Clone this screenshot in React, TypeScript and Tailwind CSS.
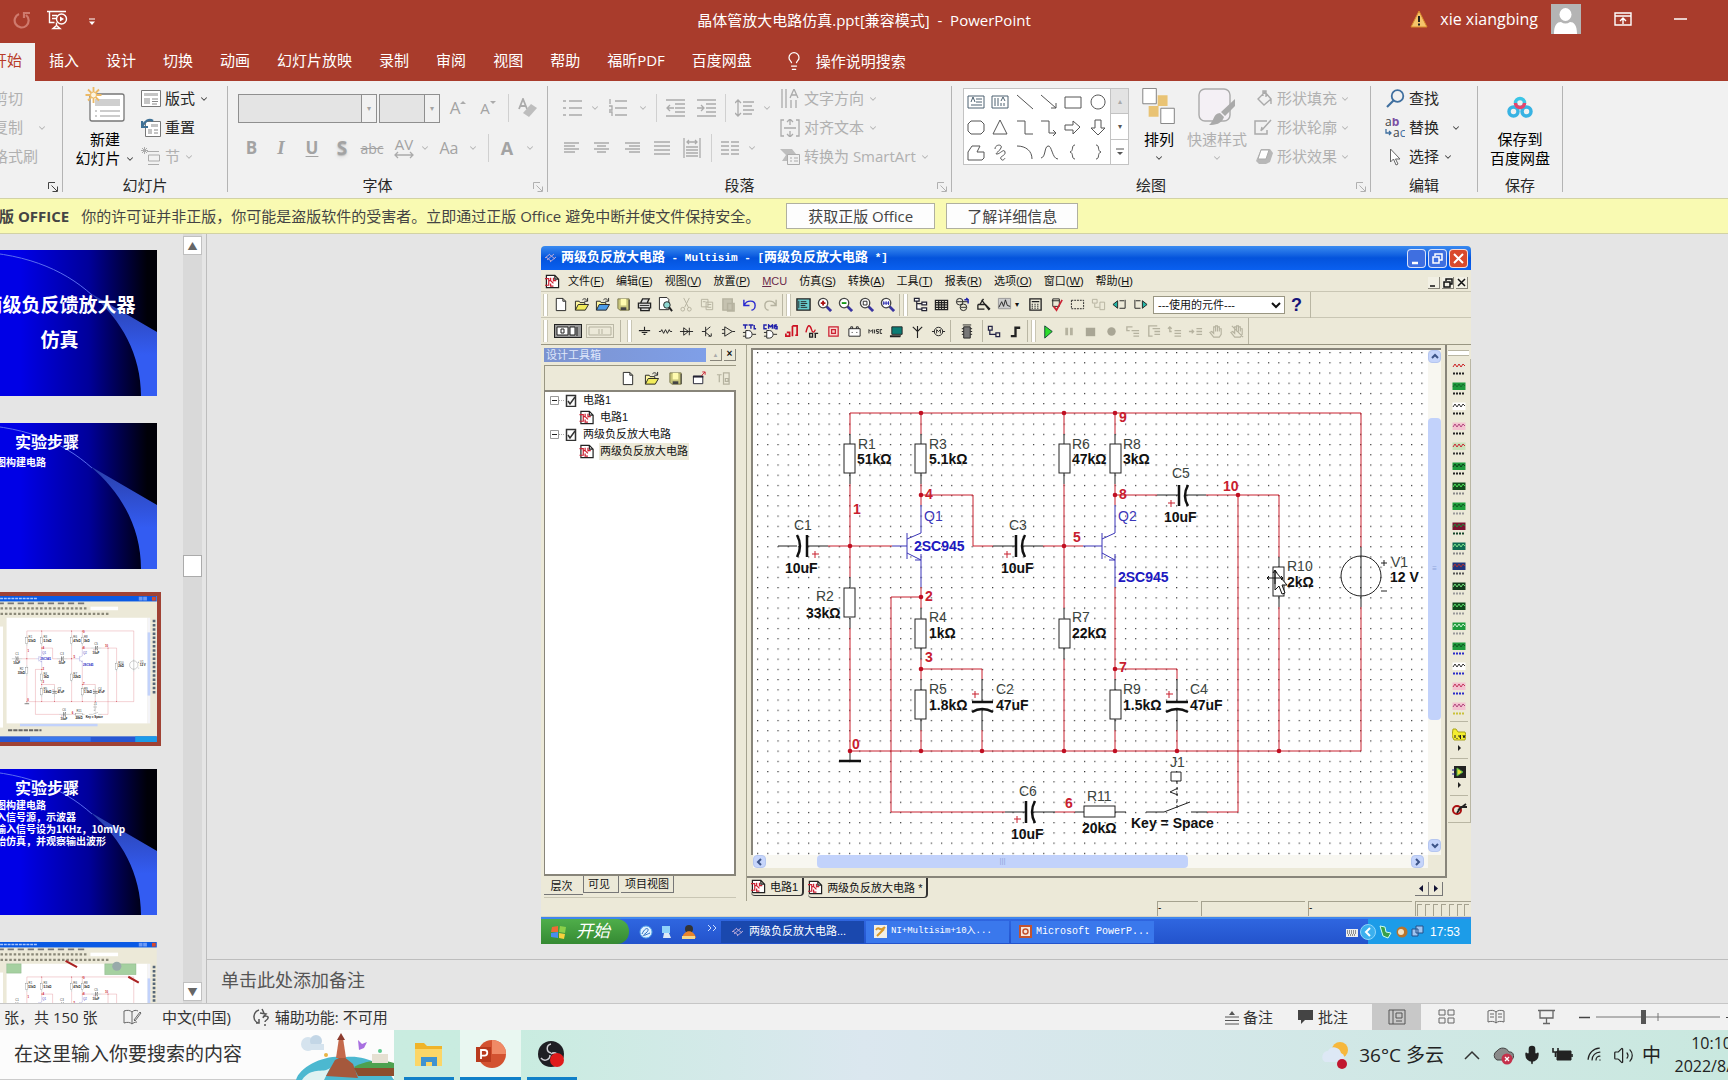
import type { ReactNode } from "react";
import { ChevronDown, Lightbulb, Mic, Volume2, Wifi } from "lucide-react";

const UI = "font-['Open_Sans','Noto_Sans_CJK_SC',sans-serif]";
const XP = "font-['Liberation_Sans','Noto_Sans_CJK_SC',sans-serif]";

/* ---------- HELPERS ---------- */

type SvgProps = { w?: number; h?: number; box?: string; className?: string; children: ReactNode };

function Svg({ w = 16, h = 16, box, className = "", children }: SvgProps) {
  return (
    <svg width={w} height={h} viewBox={box ?? `0 0 ${w} ${h}`} fill="none" className={`shrink-0 ${className}`} aria-hidden="true">
      {children}
    </svg>
  );
}

function Chev({ off = false }: { off?: boolean }) {
  return <ChevronDown size={10} strokeWidth={2.5} className={off ? "shrink-0 text-[#b5b5b5]" : "shrink-0 text-[#444]"} />;
}

function Divider() {
  return <div className="mt-[5px] h-[106px] w-px shrink-0 bg-[#b4b4b4]" />;
}

function Launcher({ off = true }: { off?: boolean }) {
  return (
    <button aria-label="更多选项" className="absolute right-1 bottom-1.5">
      <Svg w={10} h={10}>
        <path d="M.5 7V.5H7M3.5 3.5l5.5 5.5M9.500 4.500v5h-5" stroke={off ? "#b0b0b0" : "#444"} />
      </Svg>
    </button>
  );
}

function Group({ label, width, launcher = false, children }: { label: string; width: string; launcher?: boolean; children: ReactNode }) {
  return (
    <section className={`relative flex shrink-0 flex-col ${width}`}>
      <div className="flex h-[92px] pt-[3px]">{children}</div>
      <div className={`text-center leading-[25px] text-[#262626] ${launcher ? "pr-5" : ""}`}>{label}</div>
      {launcher && <Launcher />}
    </section>
  );
}

function Row({ icon, text, off = false, chev = true, gap = "gap-1" }: { icon: ReactNode; text: string; off?: boolean; chev?: boolean; gap?: string }) {
  return (
    <button className={`flex h-[29px] items-center whitespace-nowrap ${gap} ${off ? "text-[#b0b0b0]" : "text-[#262626]"}`}>
      <span className="flex w-5 shrink-0 justify-center">{icon}</span>
      {text}
      {chev && <Chev off={off} />}
    </button>
  );
}

/* ---------- TITLE BAR AND TABS ---------- */

function TitleBar() {
  return (
    <header className="relative flex h-[43px] items-center bg-[#a93c2c] pb-1 text-white">
      <button aria-label="恢复" className="ml-[13px]">
        <Svg w={18} h={20}>
          <path d="M6 4a7 7 0 1 0 7 1M11 8V3h6" stroke="#cf7a6d" strokeWidth="2.200" />
        </Svg>
      </button>
      <button aria-label="从头开始" className="ml-4">
        <Svg w={21} h={20}>
          <path d="M0 1.500h19M2.500 2v10.500h5M5 5.500h5M5 8.500h4M9.500 12.500v3M6 18.500l3.500-3 3.500 3z" stroke="#fff" strokeWidth="1.400" />
          <circle cx="14.500" cy="9" r="5" fill="#a93c2c" stroke="#fff" strokeWidth="1.400" />
          <path d="M13 6.500l4 2.500-4 2.500z" fill="#fff" />
        </Svg>
      </button>
      <button aria-label="自定义快速访问工具栏" className="mt-1 ml-5">
        <Svg w={8} h={8}><path d="M1 1h6" stroke="#fff" /><path d="M1 3.500h6L4 7z" fill="#fff" /></Svg>
      </button>
      <h1 className="absolute inset-x-0 text-center leading-[40px]">晶体管放大电路仿真.ppt[兼容模式]&nbsp; -&nbsp; PowerPoint</h1>
      <div className="absolute top-0 right-[41px] flex h-[37px] items-center">
        <Svg w={18} h={18} className="mr-3">
          <path d="M9 1l8 16H1z" fill="#f5c46a" stroke="#d98a2b" />
          <path d="M9 6v6M9 13.500v2" stroke="#222" strokeWidth="2" />
        </Svg>
        <span className="text-[16px]">xie xiangbing</span>
        <Svg w={30} h={30} className="mr-[33px] ml-[13px]">
          <rect width="30" height="30" fill="#b4b4b4" />
          <ellipse cx="14.500" cy="10.500" rx="6" ry="6.500" fill="#fff" />
          <path d="M3 30c0-9 3-12 7-12 3 2 6 2 9 0 4 0 7 3 7 12z" fill="#fff" />
        </Svg>
        <button aria-label="功能区显示选项" className="mr-[42px]">
          <Svg w={18} h={14}><path d="M1 1h16v12H1zM1 4h16M9 12V6M6 9l3-3 3 3" stroke="#fff" strokeWidth="1.400" /></Svg>
        </button>
        <button aria-label="最小化"><Svg w={13} h={4}><path d="M0 2h13" stroke="#fff" strokeWidth="1.500" /></Svg></button>
      </div>
    </header>
  );
}

const tabs = ["插入", "设计", "切换", "动画", "幻灯片放映", "录制", "审阅", "视图", "帮助", "福昕PDF", "百度网盘"];

function Tabs() {
  return (
    <nav className="flex h-[38px] overflow-hidden bg-[#a93c2c] leading-[34px] text-white">
      <button className="-ml-2 h-[38px] shrink-0 bg-[#f1f1f1] pr-[13px] pb-1 text-[#b83b28]">开始</button>
      <div className="ml-[14px] flex h-[34px] gap-[27px]">
        {tabs.map((t) => (
          <button key={t} className="whitespace-nowrap">{t}</button>
        ))}
      </div>
      <button className="ml-8 flex h-[35px] items-center gap-3 whitespace-nowrap">
        <Lightbulb size={20} strokeWidth={1.5} />
        操作说明搜索
      </button>
    </nav>
  );
}

/* ---------- RIBBON ---------- */

const G = "#ababab";

function Lines({ d, w = 19, h = 18 }: { d: string; w?: number; h?: number }) {
  return <Svg w={w} h={h}><path d={d} stroke={G} strokeWidth="1.300" /></Svg>;
}

function Cell({ w, children, label }: { w: string; children: ReactNode; label: string }) {
  return <button aria-label={label} className={`flex h-7 shrink-0 items-center justify-center ${w}`}>{children}</button>;
}

const shapes = [
  "M1 3h16v12H1zM9 6h6M9 9h6M4 12h11M4 9l2-5 2 5",
  "M1 3h16v12H1zM4 5v8M7 5v8M10 10v3M13 10v3M10 8l2-4 2 4",
  "M1 2l16 14",
  "M1 2l15 13M16 10v5h-5",
  "M1 4h16v11H1z",
  "M9 2a7 7 0 1 0 .1 0z",
  "M4 3h10l3 3v7l-3 3H4l-3-3V6z",
  "M9 2l7 14H2z",
  "M1 3h8v13h8",
  "M1 3h8v12h7M13 12l3 3-3 3",
  "M1 7h8V3l7 6-7 7v-4H1z",
  "M6 2h6v8h4l-7 7-7-7h4z",
  "M1 9l4-6h8l-3 6h7v6l-2 2H1z",
  "M4 6c0-5 8-5 6-1S3 11 6 11s7-6 8-2-6 4-4 7 4-1 4-1",
  "M1 3c9 0 15 5 15 13",
  "M1 15c5-1 3-11 7-12s4 13 10 13",
  "M11 2c-4 0-1 6-5 7 4 1 1 7 5 7",
  "M7 2c4 0 1 6 5 7-4 1-1 7-5 7",
];

function Ribbon() {
  return (
    <div className="flex h-[117px] overflow-hidden bg-[#f1f1f1]">
      <section className="relative w-[62px] shrink-0 text-[#b0b0b0]">
        <div className="-ml-[7px] pt-[3px] leading-[29px] whitespace-nowrap">
          <button className="block">剪切</button>
          <button className="flex items-center gap-3.5">复制 <Chev off /></button>
          <button className="block">格式刷</button>
        </div>
        <Launcher off={false} />
      </section>
      <Divider />

      <Group label="幻灯片" width="w-[164px]">
        <button className="ml-2 flex w-[68px] flex-col items-center pt-0.5 leading-[19px]">
          <Svg w={42} h={38}>
            <rect x="6" y="8" width="34" height="27" rx="2" fill="#fff" stroke="#777" strokeWidth="1.300" />
            <path d="M11 13h25v7H11z" fill="#cfcfcf" />
            <path d="M11 25h2M16 25h20M11 30h2M16 30h20" stroke="#999" />
            <path d="M9.500 1v16M1.500 9h16M4 3.500l11 11M15 3.500l-11 11" stroke="#ecb964" strokeWidth="1.800" />
            <circle cx="9.500" cy="9" r="3" fill="#fdf4de" stroke="#ecb964" />
          </Svg>
          <span className="mt-1.5">新建</span>
          <span className="flex items-center gap-1 whitespace-nowrap">幻灯片 <Chev /></span>
        </button>
        <div className="ml-0.5">
          <Row text="版式" icon={<Svg w={20} h={17}><path d="M.5.5h19v16H.5z" fill="#fff" stroke="#777" /><path d="M3 3h14v3H3zM3 8h6v6H3z" fill="#c4c4c4" /><path d="M11 9h6M11 11.500h6M11 14h5" stroke="#888" /></Svg>} />
          <Row text="重置" chev={false} icon={<Svg w={20} h={19}><path d="M4.500 3.500h15v15h-15z" fill="#fff" stroke="#777" /><path d="M10 6h7v3h-7zM7 11h4v5H7z" fill="#c4c4c4" /><path d="M13 12h4M13 15h4" stroke="#888" /><path d="M1 3v6h6M1.500 8C4 3 8 0 12 3" stroke="#3f7196" strokeWidth="2.200" /></Svg>} />
          <Row text="节" off icon={<Svg w={20} h={19}><path d="M6 4.500h12M7.500 8h11v6h-11zM7 17.500h11M1 1l5 5M6 1L1 6M3.500 0v7M0 3.500h7" stroke={G} /></Svg>} />
        </div>
      </Group>
      <Divider />

      <Group label="字体" width="w-[319px]" launcher>
        <div className="w-full pl-[10px] text-[#a3a3a3]">
          <div className="flex h-12 items-center">
            <input aria-label="字体名称" disabled className="h-[29px] w-[124px] border border-[#8f8f8f] bg-[#e4e4e4]" />
            <button aria-label="选择字体" className="mr-0.5 -ml-px flex h-[29px] w-4 items-center justify-center border border-[#8f8f8f] text-[8px]">▾</button>
            <input aria-label="字号" disabled className="h-[29px] w-[46px] border border-[#8f8f8f] bg-[#e4e4e4]" />
            <button aria-label="选择字号" className="-ml-px flex h-[29px] w-4 items-center justify-center border border-[#8f8f8f] text-[8px]">▾</button>
            <Cell w="w-[36px]" label="增大字号"><span className="text-[17px]">A</span><Svg w={6} h={16}><path d="M0 4l3-3 3 3z" fill={G} /></Svg></Cell>
            <Cell w="w-[24px]" label="减小字号"><span className="text-[15px]">A</span><Svg w={6} h={16}><path d="M0 1h6L3 4z" fill={G} /></Svg></Cell>
            <div className="ml-2 h-7 w-px bg-[#d0d0d0]" />
            <Cell w="w-[38px]" label="清除格式"><Svg w={20} h={20}><path d="M1 11L5 1l4 10M2.500 8h5" stroke={G} strokeWidth="1.800" /><path d="M5 15l8-9 6 4-8 9z" fill="#bdbdbd" /></Svg></Cell>
          </div>
          <div className="flex h-8 items-center text-[17px]">
            <Cell w="w-[27px]" label="加粗"><b>B</b></Cell>
            <Cell w="w-[32px]" label="倾斜"><i className="font-['Liberation_Serif',serif] text-[19px] font-bold">I</i></Cell>
            <Cell w="w-[30px]" label="下划线"><b className="underline underline-offset-2">U</b></Cell>
            <Cell w="w-[30px]" label="阴影"><b className="text-[19px] text-shadow-md">S</b></Cell>
            <Cell w="w-[30px]" label="删除线"><s className="text-[14px]">abc</s></Cell>
            <Cell w="w-[33px]" label="字符间距">
              <Svg w={20} h={22} className="overflow-visible">
                <text x="10" y="13" textAnchor="middle" fontSize="15" fill="#a3a3a3">AV</text>
                <path d="M1 18h18M4 15l-3 3 3 3M16 15l3 3-3 3" stroke={G} strokeWidth="1.300" />
              </Svg>
            </Cell>
            <Chev off />
            <Cell w="w-[38px]" label="更改大小写"><span className="text-[16px]">Aa</span></Cell>
            <Chev off />
            <div className="ml-2.5 h-7 w-px bg-[#d0d0d0]" />
            <Cell w="w-[36px]" label="字体颜色"><b className="text-[18px] leading-5">A</b></Cell>
            <Chev off />
          </div>
        </div>
      </Group>
      <Divider />

      <Group label="段落" width="w-[403px]" launcher>
        <div className="w-[232px] pl-[10px]">
          <div className="flex h-12 items-center">
            <Cell w="w-[28px]" label="项目符号"><Lines d="M0 2h3M6 2h13M0 9h3M6 9h13M0 16h3M6 16h13" /></Cell>
            <span className="ml-1"><Chev off /></span>
            <Cell w="w-[34px]" label="编号"><Lines d="M2 0v5M7 2h12M1 7h3v4H1M7 9h12M1 13h3v4M7 16h12" /></Cell>
            <span className="ml-1"><Chev off /></span>
            <div className="ml-2 h-7 w-px bg-[#d0d0d0]" />
            <Cell w="w-[36px]" label="减少缩进"><Lines d="M0 1h19M9 5h10M9 9h10M9 13h10M0 17h19M8 9H1M4 6L1 9l3 3" /></Cell>
            <Cell w="w-[26px]" label="增加缩进"><Lines d="M0 1h19M9 5h10M9 9h10M9 13h10M0 17h19M0 9h7M4 6l3 3-3 3" /></Cell>
            <div className="ml-1.5 h-7 w-px bg-[#d0d0d0]" />
            <Cell w="w-[36px]" label="行距"><Lines d="M3 1v16M0 4l3-3 3 3M0 14l3 3 3-3M8 3h11M8 7h9M8 11h11M8 15h9" /></Cell>
            <Chev off />
          </div>
          <div className="flex h-8 items-center">
            <Cell w="w-[27px]" label="左对齐"><Lines w={15} h={12} d="M0 1h15M0 4h11M0 7h15M0 10h11" /></Cell>
            <Cell w="w-[32px]" label="居中"><Lines w={15} h={12} d="M0 1h15M3 4h9M0 7h15M3 10h9" /></Cell>
            <Cell w="w-[30px]" label="右对齐"><Lines w={15} h={12} d="M0 1h15M4 4h11M0 7h15M4 10h11" /></Cell>
            <Cell w="w-[30px]" label="两端对齐"><Lines w={16} h={15} d="M0 1h16M0 5h16M0 9h16M0 13h16" /></Cell>
            <Cell w="w-[30px]" label="分散对齐"><Lines w={18} h={20} d="M1 0v20M17 0v20M4 4h10M6 2L4 4l2 2M12 2l2 2-2 2M3 9h12M3 12h12M3 15h12M3 18h12" /></Cell>
            <div className="ml-1 h-7 w-px bg-[#d0d0d0]" />
            <Cell w="w-[35px]" label="分栏"><Lines w={18} h={15} d="M0 1h8M10 1h8M0 5h8M10 5h8M0 9h8M10 9h8M0 13h8M10 13h8" /></Cell>
            <Chev off />
          </div>
        </div>
        <div>
          <Row off text="文字方向" icon={<Lines w={20} h={20} d="M2 0v19M6 0v19M11 11v8M16 11v8M10 9l4-9 4 9M11.500 6h5" />} />
          <Row off text="对齐文本" icon={<Lines w={20} h={18} d="M4 1H1v16h3M16 1h3v16h-3M10 0v6M7 3l3-3 3 3M10 12v6M7 15l3 3 3-3M4 9h12" />} />
          <Row off text="转换为 SmartArt" icon={<Svg w={20} h={17}><path d="M0 1h12l4 5h-8v7H2l4-6z" fill="#bdbdbd" /><path d="M7.500 6.500h12v10h-12zM10 10h2M14 10h4M10 13h2M14 13h4" fill="#f1f1f1" stroke={G} /></Svg>} />
        </div>
      </Group>
      <Divider />

      <Group label="绘图" width="w-[418px]" launcher>
        <div className="mt-1 ml-[11px] flex h-[77px] w-[166px] border border-[#c3c3c3] bg-white">
          <div className="grid flex-1 grid-cols-6 place-items-center">
            {shapes.map((d, i) => (
              <button key={i} aria-label={`形状 ${i + 1}`}><Svg w={18} h={18}><path d={d} stroke={i < 2 ? "#4d6170" : "#555"} /></Svg></button>
            ))}
          </div>
          <div className="flex w-[18px] flex-col border-l border-[#c3c3c3] text-[8px] text-[#555]">
            <button className="flex-1 bg-[#e3e3e3] text-[#aaa]">▴</button>
            <button className="flex-1 border-y border-[#c3c3c3]">▾</button>
            <button aria-label="其他形状" className="flex flex-1 items-center justify-center"><Svg w={8} h={8}><path d="M0 1h8" stroke="#555" /><path d="M1 4h6L4 7z" fill="#555" /></Svg></button>
          </div>
        </div>
        <button className="ml-[7px] flex w-[46px] flex-col items-center pt-1 leading-[19px]">
          <Svg w={36} h={36} box="0 0 37 40"><path d="M17 8h11v12H17zM7 20h11v12H7z" fill="#e9c374" /><path d="M.5.500h15v17H.5zM20.500 22.500h15v17h-15z" fill="#fff" stroke="#777" /></Svg>
          <span className="mt-1.5">排列</span>
          <span className="py-1"><Chev /></span>
        </button>
        <button className="flex w-[70px] flex-col items-center pt-1 leading-[19px] whitespace-nowrap text-[#b0b0b0]">
          <Svg w={38} h={38} className="-mb-0.5"><rect x="1" y="1" width="31" height="32" rx="6" fill="#f4f0f5" stroke="#aaa" strokeWidth="1.400" /><path d="M37 11v7L27 28l-4-4zM22 25l4 4c-2 7-9 8-15 8 5-3 4-12 11-12z" fill="#aaa" /></Svg>
          <span className="mt-1.5">快速样式</span>
          <span className="py-1"><Chev off /></span>
        </button>
        <div className="ml-0.5">
          <Row off text="形状填充" icon={<Svg w={17} h={17}><path d="M2 9l7-7 6 7-7 6zM7 6V1h3v6M15 9v5" stroke={G} strokeWidth="1.400" /></Svg>} gap="gap-[3px]" />
          <Row off text="形状轮廓" icon={<Svg w={20} h={17}><path d="M13 2H1v13h12v-4M8 11l9-10M7 12l1-4" stroke={G} strokeWidth="1.500" /></Svg>} gap="gap-[3px]" />
          <Row off text="形状效果" icon={<Svg w={19} h={17}><path d="M6 1h9l3 4-3 9-4 2H4l-3-3z" fill="#b8b8b8" /><path d="M6 2h8l-3 9H3z" fill="#fff" stroke={G} /></Svg>} gap="gap-[3px]" />
        </div>
      </Group>
      <Divider />

      <Group label="编辑" width="w-[106px]">
        <div className="ml-3.5">
          <Row text="查找" chev={false} icon={<Svg w={19} h={19}><circle cx="11.500" cy="7" r="5.800" stroke="#3f6f9f" strokeWidth="1.800" /><path d="M7.500 11.500L1 18" stroke="#3f6f9f" strokeWidth="2.200" /></Svg>} />
          <div className="flex items-center gap-3">
            <Row
              text="替换"
              chev={false}
              icon={
                <Svg w={20} h={20}>
                  <text x="0" y="8" fontSize="12" fill="#444">a<tspan fill="#7b4ea3" fontWeight="bold">b</tspan></text>
                  <text x="8" y="19" fontSize="12" fill="#444">a<tspan fill="#3f6f9f">c</tspan></text>
                  <path d="M1 11v4h5M4 13l2 2-2 2" stroke="#3f6f9f" strokeWidth="1.300" />
                </Svg>
              }
            />
            <Chev />
          </div>
          <Row text="选择" icon={<Svg w={12} h={18}><path d="M1.500 1v13l3-3 2.500 6 2-1-2.500-5h4.500z" fill="#fff" stroke="#666" /></Svg>} />
        </div>
      </Group>
      <Divider />

      <Group label="保存" width="w-[84px]">
        <button className="flex w-full flex-col items-center pt-3 leading-[19px]">
          <Svg w={28} h={22} className="mb-2">
            <circle cx="7.500" cy="15.500" r="4.500" stroke="#38b3e3" strokeWidth="3.500" />
            <circle cx="20.500" cy="15.500" r="4.500" stroke="#38b3e3" strokeWidth="3.500" />
            <circle cx="14" cy="7" r="4.500" stroke="#3cc5e6" strokeWidth="3.500" />
            <path d="M9.500 7a4.500 4.500 0 0 0 9 0" stroke="#e5446d" strokeWidth="3.500" />
          </Svg>
          <span className="mt-1">保存到</span>
          <span>百度网盘</span>
        </button>
      </Group>
      <Divider />
    </div>
  );
}

function LicenseBar() {
  return (
    <div className="flex h-9 shrink-0 items-center overflow-hidden border-y border-[#d2d2a4] bg-[#f9fab2] whitespace-nowrap text-[#444]">
      <b className="-ml-px">版 OFFICE</b>
      <span className="ml-3">你的许可证并非正版，你可能是盗版软件的受害者。立即通过正版 Office 避免中断并使文件保持安全。</span>
      <button className="ml-[26px] h-[26px] w-[149px] border border-[#b0b0a0] bg-[#fdfdfd] leading-6">获取正版 Office</button>
      <button className="ml-[11px] h-[26px] w-[132px] border border-[#b0b0a0] bg-[#fdfdfd] leading-6">了解详细信息</button>
    </div>
  );
}

/* ---------- SCHEMATIC ---------- */

const RED = "#c8202f";
const BLUE = "#3a35b8";

const wires = [
  "M850 434V413H1361V547M1361 607V751H850",
  "M850 484V577M850 628V751",
  "M828 546H892",
  "M921 413V434M921 484V505M921 495H973V546H993",
  "M921 587V608M921 597H891V812H1005",
  "M921 659V679M921 669H982V679M921 730V751M982 730V751",
  "M1043 546H1083M1064 413V434M1064 484V608M1064 659V751",
  "M1115 413V434M1115 484V505M1115 495H1157",
  "M1206 495H1279V557M1238 495V812H1207M1279 607V751",
  "M1115 587V679M1115 669H1177V679M1115 730V751M1177 730V751",
  "M1055 812H1075",
];

const leads = [
  "M850 434V444M850 473V484M850 577V587M850 618V628",
  "M921 434V444M921 473V484M921 608V618M921 648V659M921 679V690M921 719V730",
  "M1064 434V444M1064 473V484M1064 608V618M1064 648V659",
  "M1115 434V444M1115 473V484M1115 679V690M1115 719V730",
  "M1279 557V567M1279 596V607",
  "M778 546H797M807 546H828M993 546H1016M1023 546H1043",
  "M1157 495H1179M1186 495H1206M1005 812H1026M1032 812H1055",
  "M1075 812H1084M1115 812H1126M1146 812H1164L1190 802M1191 812H1207",
  "M982 679V702M982 709V730M1177 679V702M1177 709V730",
  "M1361 547V607M850 751V761",
  "M1171 772H1181V781H1171zM1178 788L1170 792L1178 795",
  "M1381 563H1387M1384 560V566M1381 591H1387",
];

const resistors = [
  [844, 444], [844, 588], [915, 444], [915, 619], [915, 690],
  [1059, 444], [1059, 619], [1110, 444], [1110, 690], [1273, 567],
];

const plates = [
  "M807 535V557M797 535Q803 546 797 557",
  "M1016 535V557M1025 535Q1019 546 1025 557",
  "M1179 485V506M1188 485Q1182 496 1188 506",
  "M1026 801V823M1035 801Q1029 812 1035 823",
  "M972 702H993M972 712Q982 706 993 712",
  "M1166 702H1188M1166 712Q1177 706 1188 712",
  "M839 761H861",
];

const joints = [
  [921, 413], [1064, 413], [1115, 413], [921, 495], [1115, 495], [1238, 495], [850, 546], [1064, 546],
  [921, 597], [921, 669], [1115, 669], [850, 751], [921, 751], [982, 751], [1064, 751], [1115, 751],
  [1177, 751], [1279, 751],
];

const names: [string, number, number][] = [
  ["R1", 858, 449], ["R3", 929, 449], ["R6", 1072, 449], ["R8", 1123, 449], ["C1", 794, 530], ["C3", 1009, 530],
  ["R2", 816, 601], ["R4", 929, 622], ["R7", 1072, 622], ["R5", 929, 694], ["C2", 996, 694], ["R9", 1123, 694],
  ["C4", 1190, 694], ["C5", 1172, 478], ["R10", 1287, 571], ["V1", 1391, 567], ["C6", 1019, 796], ["R11", 1087, 801], ["J1", 1170, 767],
];

const values: [string, number, number][] = [
  ["51kΩ", 857, 464], ["5.1kΩ", 929, 464], ["47kΩ", 1072, 464], ["3kΩ", 1123, 464], ["10uF", 785, 573], ["10uF", 1001, 573],
  ["33kΩ", 806, 618], ["1kΩ", 929, 638], ["22kΩ", 1072, 638], ["1.8kΩ", 929, 710], ["47uF", 996, 710], ["1.5kΩ", 1123, 710],
  ["47uF", 1190, 710], ["10uF", 1164, 522], ["2kΩ", 1287, 587], ["12 V", 1390, 582], ["10uF", 1011, 839], ["20kΩ", 1082, 833],
  ["Key = Space", 1131, 828],
];

const nets: [string, number, number][] = [
  ["1", 853, 514], ["4", 925, 499], ["2", 925, 601], ["3", 925, 662], ["5", 1073, 542], ["0", 852, 749],
  ["6", 1065, 808], ["9", 1119, 422], ["8", 1119, 499], ["7", 1119, 672], ["10", 1223, 491],
];

const pluses = [[815, 554], [1007, 554], [1171, 503], [1017, 819], [975, 694], [1169, 694]];

function Schematic() {
  return (
    <g fontFamily="'Liberation Sans', sans-serif" fontSize="14" fill="none">
      {wires.map((d) => <path key={d} d={d} stroke={RED} />)}
      {leads.map((d) => <path key={d} d={d} stroke="#222" />)}
      {resistors.map(([x, y]) => <rect key={`${x}-${y}`} x={x} y={y} width="11" height="29" fill="#fff" stroke="#222" />)}
      <rect x="1084" y="806" width="31" height="11" fill="#fff" stroke="#222" />
      {plates.map((d) => <path key={d} d={d} stroke="#111" strokeWidth="2.500" />)}
      <path d="M1177 781V808" stroke="#222" strokeDasharray="3 3" />
      <circle cx="1361" cy="576" r="20" stroke="#222" />
      <path d="M892 546H907M907 533V559M907 539L921 533V505M907 553L921 560V587M915 560H921V554" stroke={BLUE} />
      <path d="M1083 546H1102M1102 533V559M1102 539L1115 533V505M1102 553L1115 560V587M1109 560H1115V554" stroke={BLUE} />
      {joints.map(([x, y]) => <circle key={`${x}-${y}`} cx={x} cy={y} r="2.300" fill="#c00f22" />)}
      {pluses.map(([x, y]) => <path key={`${x}-${y}`} d={`M${x - 3} ${y}H${x + 4}M${x} ${y - 3}V${y + 4}`} stroke={RED} />)}
      {names.map(([t, x, y]) => <text key={t} x={x} y={y} fill="#3c4440">{t}</text>)}
      <text x="924" y="521" fill={BLUE}>Q1</text>
      <text x="1118" y="521" fill={BLUE}>Q2</text>
      <g fontWeight="bold">
        {values.map(([t, x, y]) => <text key={`${x}-${y}`} x={x} y={y} fill="#111">{t}</text>)}
        {nets.map(([t, x, y]) => <text key={t} x={x} y={y} fill={RED}>{t}</text>)}
        <text x="914" y="551" fill="#2018c0">2SC945</text>
        <text x="1118" y="582" fill="#2018c0">2SC945</text>
      </g>
    </g>
  );
}

/* ---------- MULTISIM TOOLBARS ---------- */

const K = "#222";
const N = "#b5b29f";
const page = <path d="M3.500 1.500h7l3 3v10h-10zM10.500 1.500v3h3" fill="#fff" stroke={K} />;
const sheetIcon = (
  <>
    <path d="M1.500 1.500h9l4 4v9h-13zM10.500 1.500v4h4" fill="#fff" stroke={K} strokeWidth="1.300" />
    <path d="M0 5h4v7H0M6 4v3H4M6 7l3 3M9 4v4M9 7h3M6 10v3h3" stroke="#c23" strokeWidth="1.300" />
  </>
);
const folder = (c: string) => (
  <>
    <path d="M1.500 14V4.500h4l1 1.500h5v2" fill="#fff7a0" stroke={K} />
    <path d="M1.500 14l3-6h11l-3.500 6z" fill={c} stroke={K} />
    <path d="M9 3c2-2 4-1 5 1M14.500 1v3.500H11" stroke={K} />
  </>
);
const floppy = (
  <>
    <path d="M2 2h12v12H4l-2-2z" fill="#c9c67c" stroke="#77754a" />
    <path d="M5 2h6v7H5z" fill="#fffbb0" />
    <path d="M5 11h6v3H5z" fill="#444" />
    <path d="M14 3v11" stroke="#333" />
  </>
);
const lens = (inner: ReactNode) => (
  <>
    <path d="M10 10l5 5" stroke="#3a35a0" strokeWidth="3" />
    <circle cx="6.500" cy="6.500" r="5" fill="#fff" stroke="#444" strokeWidth="1.400" />
    {inner}
  </>
);

const fileTools: ReactNode[] = [
  page,
  folder("#f2ec5a"),
  folder("#4c9be8"),
  floppy,
  <><path d="M4 6l2-4h7l-2 4M1.500 6.500h13v5h-13zM4 11.500h9v3H4z" fill="#ddd" stroke={K} strokeWidth="1.400" /><path d="M3 9h10" stroke={K} /></>,
  <><path d="M1.500.5h8l2 2v11h-10z" fill="#fff" stroke={K} /><circle cx="9.500" cy="8.500" r="3.500" fill="#8fd7d2" stroke={K} /><path d="M12 11l3 4" stroke={K} strokeWidth="2" /></>,
  <path d="M5 1l5 10M11 1L6 11M4 15a2 2 0 1 0 0-4 2 2 0 0 0 0 4M11 15a2 2 0 1 0 0-4 2 2 0 0 0 0 4" stroke={N} />,
  <path d="M1.500 2.500h7v8h-7zM6.500 5.500h7v8h-7zM8 8h4M8 11h4M3 5h3" fill="#ecead8" stroke={N} />,
  <path d="M2 2h10v12H2zM7 7h7v8H7z" fill="#c5c2b0" stroke={N} strokeWidth="1.500" />,
  <path d="M2 3v6h6M2.500 8.500C5 3 14 3 14 9c0 3-2 5-4 5" stroke="#2b2bd0" strokeWidth="1.500" />,
  <path d="M14 3v6H8M13.500 8.500C11 3 2 3 2 9c0 3 2 5 4 5" stroke={N} strokeWidth="1.500" />,
];

const viewTools: ReactNode[] = [
  <><path d="M1 2h14v12H1z" fill="#68cfd0" stroke={K} strokeWidth="1.500" /><path d="M5 5h6M5 7h7M5 9h5M5 11h7M3 4v8" stroke={K} /></>,
  lens(<path d="M4 6.500h5M6.500 4v5" stroke="#a11" strokeWidth="2" />),
  lens(<path d="M4 6.500h5" stroke="#191" strokeWidth="2" />),
  lens(<path d="M4.500 4.500h4v4h-4z" stroke={K} />),
  lens(<path d="M3 6.500h7M4 4.500v4M6.500 4.500v4M9 4.500v4" stroke="#22a" />),
];

const designTools: ReactNode[] = [
  <path d="M1.500 1.500h5v3h-5zM9.500 5.500h5v3h-5zM9.500 11.500h5v3h-5zM4 5v8h5M4 7h5" fill="#fff" stroke="#223" strokeWidth="1.300" />,
  <path d="M1.500 3.500h13v10h-13zM1.500 6h13M1.500 8.500h13M1.500 11h13M5 3v11M8 3v11M11 3v11" stroke={K} strokeWidth="1.300" />,
  <><circle cx="5" cy="5" r="3.500" stroke={K} /><circle cx="9" cy="11" r="3.500" stroke={K} /><path d="M2 5h12M6 11h6" stroke={K} /><path d="M10 3h4v4M12 1l2 2" stroke="#22a" strokeWidth="1.500" /></>,
  <path d="M2 8h8l5 5M2 8v5h7M4 8l4-6M6 3l8 11" stroke={K} strokeWidth="1.400" />,
  <><path d="M1.500 1.500h13v11h-13z" fill="#ccc" stroke="#999" /><path d="M2 11l3-6 2 5 2-7 2 6 3 1" stroke={K} /></>,
];

const checkTools: ReactNode[] = [
  <path d="M2 2h12v12H2zM4 5h8M4 8h1M7 8h1M10 8h1M4 10h1M7 10h1M10 10h1M4 12h1M7 12h1M10 12h1" stroke={K} strokeWidth="1.400" />,
  <><path d="M4 2h7v8H4zM3 4h8" stroke={K} /><path d="M5 10l3 4 6-11" stroke="#c23" strokeWidth="1.800" /></>,
  <path d="M1.500 3.500h13v9h-13z" stroke={K} strokeDasharray="2 1" />,
  <path d="M1.500 2.500h5v4h-5zM9.500 5.500h5v8h-5zM4 7v4h5" stroke={N} />,
  <><path d="M14 3v9H8M8 4h5" stroke={K} /><path d="M1 8l5-4v8z" fill="#24b5a5" stroke={K} /></>,
  <><path d="M2 3v9h6M8 4H3" stroke={K} /><path d="M15 8l-5-4v8z" fill="#24b5a5" stroke={K} /></>,
];

const partTools: ReactNode[] = [
  <path d="M2 7h12M5 9h6M8 3v4M7 11h2" stroke={K} strokeWidth="1.200" />,
  <path d="M1 8h2l1-2 2 4 2-4 2 4 2-4 1 2h2" stroke={K} />,
  <path d="M1 8h14M5 4v8l5-4zM11 4v8" stroke={K} />,
  <path d="M2 8h4M6 3v10M6 7l5-4M6 9l5 4M9 13h3v-3" stroke={K} />,
  <path d="M4 3v10l8-5zM1 6h3M1 10h3M12 8h3" stroke={K} />,
  <><path d="M4 7v8h3c5 0 5-8 0-8zM1 9h3M1 13h3M11 11h4" fill="#fff" stroke={K} /><path d="M1 1h5M3.500 1v4M7 1h5M9.500 1v4M13 1v4h2" stroke="#22a" strokeWidth="1.500" /></>,
  <><path d="M4 7v8h3c5 0 5-8 0-8zM1 9h3M1 13h3M11 11h4" fill="#fff" stroke={K} /><path d="M4 1H1v4h3M6 5V1l2 2 2-2v4M12 5V1M15 1h-2v2h2v2h-2" stroke="#22a" strokeWidth="1.500" /></>,
  <path d="M9 2h5v10M9 2v11M3 9h3v4H2v-3M12 12h3" stroke="#c12" strokeWidth="1.800" />,
  <><path d="M1 9c2-9 4-9 6-3 1 4 3 3 4 0" stroke="#c12" strokeWidth="1.500" /><path d="M5 10v4h3v-4zM11 10v5M10 10h4" stroke={K} strokeWidth="1.500" /></>,
  <path d="M3 3h10v10H3zM6 6h4v4H6z" fill="#f7d6d0" stroke="#c23" strokeWidth="1.300" />,
  <path d="M2 5h12v8H2zM4 5V3h2v2M10 5V3h2v2M5 9h1M10 9h1" fill="#fff" stroke={K} />,
  <path d="M1 10V6l2 2 2-2v4M7 6v4M12 6H9v2h2v2H9M15 6h-2v4h2" stroke={K} />,
  <><path d="M3 3h11v8H3z" fill="#0b7c74" stroke={K} /><path d="M1 12h12l-1 2H1z" fill={K} /></>,
  <path d="M8 2v13M3 3l5 5 5-5" stroke={K} strokeWidth="1.200" />,
  <><circle cx="8" cy="8" r="4.500" stroke={K} /><path d="M1 8h3M12 8h3M6 10V6l2 2 2-2v4" stroke={K} /></>,
];

const simTools: ReactNode[] = [
  <path d="M4 2l8 6-8 7z" fill="#2cdc2c" stroke="#143" />,
  <path d="M5 4v8M10 4v8" stroke={N} strokeWidth="3" />,
  <path d="M3 4h10v9H3z" fill="#a9a695" />,
  <circle cx="8" cy="8" r="4.500" fill="#a9a695" />,
  <path d="M8 3H2v4h3M7 7h8M9 10h6M9 13h6" stroke={N} strokeWidth="1.400" />,
  <path d="M12 2H3v11h4M7 5h8M9 8h6M9 11h6" stroke={N} strokeWidth="1.400" />,
  <path d="M5 8H3V3M1 5l2-2 2 2M8 7h7M8 10h7M8 13h7" stroke={N} strokeWidth="1.400" />,
  <path d="M1 8h5M4 6l2 2-2 2M9 5h6M9 8h6M9 11h6" stroke={N} strokeWidth="1.400" />,
  <path d="M5 14L1 9l2-1 2 2V3h2v5-6h2v6-5h2v5-3h2v6l-2 3z" stroke={N} strokeWidth="1.200" />,
  <path d="M5 14L1 9l2-1 2 2V3h2v5-6h2v6-5h2v5-3h2v6l-2 3zM2 2l12 12" stroke={N} strokeWidth="1.200" />,
];

function Tools({ items, label }: { items: ReactNode[]; label: string }) {
  return (
    <div className="flex shrink-0" role="group" aria-label={label}>
      {items.map((it, i) => (
        <button key={i} aria-label={`${label} ${i + 1}`} className="flex w-[21px] justify-center">
          <Svg w={15} h={15} box="0 0 16 16">{it}</Svg>
        </button>
      ))}
    </div>
  );
}

function Handle() {
  return <div className="mx-0.5 h-[22px] w-[5px] shrink-0 border-x border-x-[#c9c6b4] bg-white" />;
}

function Sep() {
  return <div className="mx-px h-[22px] w-px shrink-0 bg-[#b9b6a3]" />;
}

const menus = [
  ["文件", "F"], ["编辑", "E"], ["视图", "V"], ["放置", "P"], ["", "MCU"], ["仿真", "S"], ["转换", "A"],
  ["工具", "T"], ["报表", "R"], ["选项", "O"], ["窗口", "W"], ["帮助", "H"],
];

function MultisimTop() {
  return (
    <>
      <div className="flex h-6 items-center rounded-t-sm bg-linear-to-b from-[#3a8bf0] via-[#0453dc] to-[#0a60f0] px-[3px] text-white">
        <Svg w={13} h={12}><path d="M1 6l5-4M3 8l7-6M6 10l6-5M2 5l5 4M6 3l5 4" stroke="#b9a9d8" /></Svg>
        <div className="ml-1 flex-1 font-['Liberation_Mono','Noto_Sans_CJK_SC',monospace] text-[13px] leading-6 font-bold whitespace-pre">
          两级负反放大电路<span className="text-[11px]"> - Multisim - [</span>两级负反放大电路<span className="text-[11px]"> *]</span>
        </div>
        <div className="flex gap-[2px]">
          <button aria-label="最小化" className="rounded-sm border border-white/80 bg-[#3f6fe0]"><Svg w={17} h={17}><path d="M4 13h6" stroke="#fff" strokeWidth="2.500" /></Svg></button>
          <button aria-label="还原" className="rounded-sm border border-white/80 bg-[#3f6fe0]"><Svg w={17} h={17}><path d="M6 6V4h7v6h-3M4 7h6v6H4z" stroke="#fff" strokeWidth="1.500" /></Svg></button>
          <button aria-label="关闭" className="rounded-sm border border-white/80 bg-[#d9492c]"><Svg w={17} h={17}><path d="M4 4l9 9M13 4l-9 9" stroke="#fff" strokeWidth="2" /></Svg></button>
        </div>
      </div>

      <div className="flex h-[22px] items-center border-b border-[#c9c6b4] pt-px pr-[3px] pl-1">
        <Svg w={15} h={15} box="0 0 16 16">{sheetIcon}</Svg>
        <div className="ml-2 flex flex-1 gap-3 whitespace-nowrap">
          {menus.map(([t, k]) => (
            <button key={k} className={t ? "" : "text-[#6b2a4a]"}>
              {t ? <>{t}(<u>{k}</u>)</> : <><u>M</u>CU</>}
            </button>
          ))}
        </div>
        <div className="mt-1 flex gap-0.5">
          {["M2 9h5", "M4 4V2h6v5H8M2 5h6v5H2z", "M2 2l7 7M9 2L2 9"].map((d) => (
            <button key={d} aria-label="子窗口" className="border-r border-b border-[#88857a] bg-[#f2f0e4]"><Svg w={11} h={11}><path d={d} stroke="#111" strokeWidth="1.500" /></Svg></button>
          ))}
        </div>
      </div>

      <div className="flex h-[26px] items-center border-b border-[#c9c6b4]">
        <Handle />
        <Tools label="标准" items={fileTools} />
        <Sep />
        <Handle />
        <Tools label="视图" items={viewTools} />
        <Sep />
        <Handle />
        <Tools label="主" items={designTools} />
        <span className="w-2.5 text-[8px]">▾</span>
        <Tools label="检查" items={checkTools} />
        <select aria-label="使用的元件" className="ml-0.5 h-[18px] w-[132px] border border-[#999682] bg-white text-[11px] leading-4">
          <option>---使用的元件---</option>
        </select>
        <button aria-label="帮助" className="ml-1.5 text-[18px] leading-5 font-bold text-[#15157a]">?</button>
        <div className="ml-2 h-[26px] w-px bg-[#b9b6a3]" />
      </div>

      <div className="flex h-[26px] items-center">
        <Handle />
        <button aria-label="仿真开关" className="ml-1 border border-[#222] bg-[#999]">
          <Svg w={26} h={12}><path d="M2 2h11v8H2zM15 2h5v8h-5z" fill="#fff" stroke={K} /><path d="M6 4h3v4H6zM22 2v9" stroke={K} /></Svg>
        </button>
        <button aria-label="暂停" className="ml-1 border border-[#bbb8a6]">
          <Svg w={26} h={12}><path d="M2 2h22v8H2zM12 4v5M15 4v5" stroke={N} /></Svg>
        </button>
        <div className="mr-1 ml-1.5 h-[22px] w-px bg-[#b9b6a3]" />
        <Handle />
        <Tools label="元件" items={partTools} />
        <Sep />
        <div className="px-1">
          <Tools label="总线" items={[<path d="M5 3h7v12H5zM3 5h2M3 8h2M3 11h2M12 5h2M12 8h2M12 11h2M4 1h9" fill="#777" stroke={K} />]} />
        </div>
        <Sep />
        <Tools label="层次" items={[<path d="M1.500 2.500h4v4h-4zM9.500 9.500h4v4h-4zM3 7v4h6" stroke="#224" strokeWidth="1.300" />, <path d="M3 13h5V4h5" stroke={K} strokeWidth="2.500" />]} />
        <Sep />
        <Handle />
        <Tools label="仿真" items={simTools} />
        <div className="h-[26px] w-px bg-[#b9b6a3]" />
      </div>
    </>
  );
}

/* ---------- MULTISIM BODY ---------- */

function TreeRow({ child = false, text, active = false }: { child?: boolean; text: string; active?: boolean }) {
  return (
    <li className={`flex h-[17px] items-center ${child ? "pl-[34px]" : "pl-[5px]"}`}>
      {child ? (
        <Svg w={16} h={15} box="0 0 16 16">{sheetIcon}</Svg>
      ) : (
        <>
          <Svg w={15} h={9}><path d="M.5.5h8v8h-8z" fill="#fff" stroke="#999" /><path d="M2 4.500h5" stroke="#222" /><path d="M9 4.500h6" stroke="#aaa" strokeDasharray="1 1" /></Svg>
          <Svg w={12} h={13} className="mr-1.5"><path d="M1.500 1.500h9v11h-9z" fill="#fff" stroke="#333" strokeWidth="1.500" /><path d="M3 7l2 3 5-7" stroke="#333" strokeWidth="1.500" /></Svg>
        </>
      )}
      <span className={active ? "ml-1 bg-[#ece9d8] px-px" : child ? "ml-1 px-px" : ""}>{text}</span>
    </li>
  );
}

function DesignToolbox() {
  return (
    <aside className="flex w-[206px] shrink-0 flex-col border-r border-[#a5a28f] pt-0.5 pr-2.5 pl-[3px]">
      <div className="flex h-[15px] items-center">
        <div className="mr-1 h-[14px] flex-1 bg-linear-to-r from-[#7c93cf] to-[#7f9fe8] pl-0.5 leading-[14px] text-[#dfe7fa]">设计工具箱</div>
        <button className="h-3 w-3 border-r border-b border-[#88857a] text-[6px] leading-3 text-[#aaa]">▲</button>
        <button className="ml-0.5 h-3 w-3 border-r border-b border-[#88857a] text-[10px] leading-[10px] font-bold">×</button>
      </div>
      <div className="mt-[3px] flex h-[25px] items-center justify-end gap-[9px] border-t border-l border-[#999682] pr-[5px]">
        {[page, folder("#f2ec5a"), floppy,
          <><path d="M1.500 5.500h10v8h-10z" fill="#fff" stroke="#223" /><path d="M1 6h11" stroke="#223" strokeWidth="2" /><path d="M10 5l4-4M11 1h3v3" stroke="#c23" /></>,
          <path d="M1 4h5M3.500 4v8M8 2h6v12H8zM10 8h3v3h-3z" stroke={N} strokeWidth="1.300" />].map((it, i) => (
          <button key={i} aria-label={`设计工具箱 ${i + 1}`}><Svg w={15} h={15} box="0 0 16 16">{it}</Svg></button>
        ))}
      </div>
      <ul className="flex-1 border-t-2 border-r-2 border-b-2 border-l border-[#88857a] bg-white">
        <TreeRow text="电路1" />
        <TreeRow child text="电路1" />
        <TreeRow text="两级负反放大电路" />
        <TreeRow child active text="两级负反放大电路" />
      </ul>
      <div className="mb-[3px] flex h-[22px] items-start border-b border-[#c9c6b4] leading-[17px]">
        <button className="h-[19px] w-[39px] border-b border-[#777] pr-1 text-center leading-5">层次</button>
        <button className="h-[17px] w-9 border-r border-b border-l border-[#777] pr-1">可见</button>
        <button className="ml-0.5 h-[17px] w-[53px] border-r border-b border-[#777]">项目视图</button>
      </div>
    </aside>
  );
}

function ScrollArrow({ d, label }: { d: string; label: string }) {
  return (
    <button aria-label={label} className="shrink-0 rounded-sm border border-[#b5c6f0] bg-[#c6d5fb]">
      <Svg w={11} h={11}><path d={d} stroke="#3d5488" strokeWidth="2" /></Svg>
    </button>
  );
}

function SchematicPane() {
  return (
    <div className="flex min-w-0 flex-1 flex-col pb-[3px]">
      <div className="flex min-h-0 flex-1 flex-col border-r-2 border-b-2 border-[#88857a] pt-[3px] pr-1 pb-2">
        <div className="ml-1 flex min-h-0 flex-1 border-t-2 border-l-2 border-[#88857a]">
          <svg viewBox="753 350 674 505" preserveAspectRatio="xMinYMin meet" className="h-full min-w-0 flex-1 bg-white">
            <defs>
              <pattern id="grid-dots" x="757" y="352" width="10.220" height="10.220" patternUnits="userSpaceOnUse">
                <rect width="1.200" height="1.200" fill="#333" />
              </pattern>
            </defs>
            <rect x="753" y="350" width="680" height="520" fill="url(#grid-dots)" />
            <Schematic />
            <path d="M1275 571v19l4-4 3 8 3-1-3-8h5z" fill="#fff" stroke="#111" />
            <path d="M1267 578h16M1275 570v14M1269 576l-2 2 2 2M1281 576l2 2-2 2M1273 573l2-3 2 3" stroke="#111" fill="none" />
          </svg>
          <div className="flex w-[13px] flex-col bg-[#f8f7f1]">
            <ScrollArrow label="向上" d="M3 7l3-3 3 3" />
            <div className="mt-[55px] flex h-[302px] items-center justify-center rounded-sm bg-[#c2d2fb] text-[8px] text-[#8fa6dc]">≡</div>
            <div className="mt-auto"><ScrollArrow label="向下" d="M3 4l3 3 3-3" /></div>
          </div>
        </div>
        <div className="mr-[13px] ml-1.5 flex h-[13px] bg-[#f8f7f1]">
          <ScrollArrow label="向左" d="M7 3L4 6l3 3" />
          <div className="ml-[51px] w-[371px] rounded-sm bg-[#c2d2fb] text-center text-[8px] leading-3 text-[#8fa6dc]">|||</div>
          <div className="mr-1 ml-auto flex"><ScrollArrow label="向右" d="M4 3l3 3-3 3" /></div>
        </div>
      </div>
      <div className="flex h-5 items-start pl-1 leading-[18px]">
        <button className="flex h-[18px] items-center gap-1 rounded-b-sm border-r-2 border-b border-[#333] pr-1"><Svg w={15} h={15} box="0 0 16 16">{sheetIcon}</Svg>电路1</button>
        <button className="ml-1 flex h-5 items-center gap-1 rounded-b-sm border-r-2 border-b border-[#333] pr-1"><Svg w={15} h={15} box="0 0 16 16">{sheetIcon}</Svg>两级负反放大电路 *</button>
        <div className="mt-1 mr-1 ml-auto flex">
          <button aria-label="上一页" className="border-r border-b border-[#777]"><Svg w={13} h={13}><path d="M8 3v7L4 6.500z" fill="#113" /></Svg></button>
          <button aria-label="下一页" className="border-r border-b border-[#777]"><Svg w={13} h={13}><path d="M5 3v7l4-3.500z" fill="#113" /></Svg></button>
        </div>
      </div>
    </div>
  );
}

// top: screen colour, trace: line over the screen, foot: pins or caption
const instruments = [
  { top: "#e8e8dc", trace: "#c22", foot: "#222" },
  { top: "#1f9a3c", trace: "#156b2a", foot: "#222" },
  { top: "#fff", trace: "#333", foot: "#222" },
  { top: "#f3c3d0", trace: "#b0457c", foot: "#222" },
  { top: "#c9e0b8", trace: "#c23", foot: "#333" },
  { top: "#1f9a3c", trace: "#0a3a16", foot: "#222" },
  { top: "#114d1c", trace: "#4ce35a", foot: "#888" },
  { top: "#1fa03c", trace: "#0e5520", foot: "#999" },
  { top: "#7a1630", trace: "#1c8a3a", foot: "#14442a" },
  { top: "#0f6b50", trace: "#7ae08a", foot: "#888" },
  { top: "#22357a", trace: "#a33", foot: "#555" },
  { top: "#123a1a", trace: "#6fe07a", foot: "#999" },
  { top: "#0f4a1a", trace: "#58d868", foot: "#999" },
  { top: "#1f9a3c", trace: "#c9f2cf", foot: "#999" },
  { top: "#1f9a3c", trace: "#0e5520", foot: "#2a2ac8" },
  { top: "#fff", trace: "#333", foot: "#2a2ac8" },
  { top: "#f3c3d0", trace: "#c2345c", foot: "#2a2ac8" },
  { top: "#f3c3d0", trace: "#b0457c", foot: "#c9c23a" },
];

function InstrumentBar() {
  return (
    <div className="w-6 shrink-0 pl-px">
      <div className="mt-[5px] mr-0.5 mb-[3px] h-1.5 border-y border-[#b9b6a3] bg-white" />
      <div className="flex flex-col items-center border-r border-b border-[#b9b6a3]">
        {instruments.map((it, i) => (
          <button key={i} aria-label={`仪器 ${i + 1}`} className="flex h-5 items-center">
            <Svg w={14} h={14}>
              <path d="M.5.500h13v7.500H.500z" fill={it.top} />
              <path d="M1 5l2-3 2 3 2-3 2 3 2-3 2 2" stroke={it.trace} />
              <path d="M1 11.500h12" stroke={it.foot} strokeWidth="2" strokeDasharray="2 1" />
            </Svg>
          </button>
        ))}
        <div className="mt-0.5 h-px w-[18px] bg-[#b9b6a3]" />
        <button aria-label="测量探针" className="mt-1.5"><Svg w={14} h={14}><path d="M1 1h3l2 3h7l1 3-1 5H2L0 8z" fill="#f4ee30" stroke="#a8a21a" /><path d="M3 7v3M5 10v1M7 7v2h2M8.500 7v4M11 7l1 3 1-3" stroke="#222" /></Svg></button>
        <Svg w={8} h={12}><path d="M3 3v6l3-3z" fill="#222" /></Svg>
        <div className="mt-1 h-px w-[18px] bg-[#b9b6a3]" />
        <button aria-label="LabVIEW 仪器" className="mt-1.5"><Svg w={14} h={14}><path d="M2 1h12v12H2z" fill="#222" /><path d="M5 3v8l6-4z" fill="#e7e03a" stroke="#4a4" /><path d="M0 5h3M0 9h3" stroke="#228" /></Svg></button>
        <Svg w={8} h={12}><path d="M3 3v6l3-3z" fill="#222" /></Svg>
        <div className="mt-1 h-px w-[18px] bg-[#b9b6a3]" />
        <button aria-label="电流探针" className="my-1.5"><Svg w={15} h={14}><circle cx="5" cy="8" r="4" stroke="#a11" strokeWidth="2" /><path d="M6 8l8-6M5 11l4-6h6" stroke="#222" strokeWidth="1.800" /></Svg></button>
      </div>
    </div>
  );
}

function XpTaskbar() {
  return (
    <div className="flex h-[27px] items-center border-t-2 border-[#3f86ee] bg-linear-to-b from-[#2f66e0] to-[#2353cc] text-white">
      <button className="flex h-full w-[88px] shrink-0 items-center gap-2 rounded-r-xl bg-linear-to-b from-[#4fae4a] to-[#358a33] pl-2.5">
        <Svg w={17} h={16}><path d="M1 3l6-1v6H0z" fill="#f06a35" /><path d="M9 2l6 1-1 6-6-1z" fill="#8cd04a" /><path d="M0 9l7-1v6l-7-1z" fill="#4b8cf0" /><path d="M8 9l6 1-1 5-5-1z" fill="#f7d13d" /></Svg>
        <i className="text-[17px] leading-6">开始</i>
      </button>
      <Svg w={84} h={20} className="ml-2">
        <circle cx="9" cy="10" r="6" fill="#dff0ff" stroke="#5aa8e8" /><path d="M5 12c4-9 9-5 4-1s-3 3 4 0" stroke="#2a6fc0" />
        <path d="M25 4h8v7h-8z" fill="#8fd2fa" /><path d="M27 11h5l2 5h-8z" fill="#dfe9f5" />
        <circle cx="52" cy="7" r="4" fill="#333" /><path d="M45 16c2-9 12-9 14 0z" fill="#e8832b" /><path d="M45 14h13v3H45z" fill="#f4d78a" />
        <path d="M71 3l3 3-3 3M76 3l3 3-3 3" stroke="#cfe0ff" />
      </Svg>
      <button className="flex h-[22px] w-[143px] shrink-0 items-center gap-1.5 bg-[#1a48ae] pl-2.5">
        <Svg w={12} h={12}><path d="M1 6l5-4M3 8l7-6M6 10l6-5M2 5l5 4M6 3l5 4" stroke="#b9a9d8" /></Svg>
        两级负反放大电路...
      </button>
      <button className="ml-0.5 flex h-[22px] w-[143px] shrink-0 items-center gap-1 bg-[#3a78ec] pl-2 font-['Liberation_Mono','Noto_Sans_CJK_SC',monospace] text-[9px]">
        <Svg w={13} h={13}><path d="M0 0h13v13H0z" fill="#f2efe6" /><path d="M2 5c3-5 4 3 9-3M3 11l7-7" stroke="#d89a2b" strokeWidth="2" /></Svg>
        NI+Multisim+10入...
      </button>
      <button className="ml-0.5 flex h-[22px] w-[143px] shrink-0 items-center gap-1 bg-[#3a78ec] pl-2 font-['Liberation_Mono','Noto_Sans_CJK_SC',monospace] text-[10px]">
        <Svg w={13} h={13}><path d="M0 0h13v13H0z" fill="#c4532e" /><path d="M2 2h9v9H2z" fill="#f6e7dc" /><circle cx="6.500" cy="6.500" r="2.500" stroke="#c4532e" strokeWidth="1.500" /></Svg>
        Microsoft PowerP...
      </button>
      <Svg w={12} h={10} className="mr-2.5 ml-auto"><path d="M0 2h12v8H0z" fill="#eee" /><path d="M1 4h10M1 6h10M2 8h8" stroke="#333" strokeDasharray="1 1" /></Svg>
      <div className="flex h-full w-[103px] shrink-0 items-center bg-[#1c9ce8] text-[12px]">
        <Svg w={16} h={16} className="-ml-2"><circle cx="8" cy="8" r="7.500" fill="#3bb0ee" stroke="#8fd6fa" /><path d="M10 4L6 8l4 4" stroke="#fff" strokeWidth="2" /></Svg>
        <Svg w={46} h={16} className="ml-0.5">
          <path d="M2 2l5 1 1 5 5 1-3 5-5-2z" fill="#3aa04a" stroke="#cfe" />
          <circle cx="24" cy="8" r="5.500" fill="#b8742c" /><circle cx="23" cy="8" r="3" fill="#f2e2c4" />
          <path d="M34 5h6v7h-6zM38 2h7v7h-7z" fill="#9ec4f0" stroke="#24508a" />
        </Svg>
        <span className="ml-1.5">17:53</span>
      </div>
    </div>
  );
}

function Multisim() {
  return (
    <div className={`flex h-[698px] w-[930px] shrink-0 flex-col overflow-hidden bg-[#ece9d8] text-[11px] text-[#111] ${XP}`}>
      <MultisimTop />
      <div className="flex min-h-0 flex-1 border-t border-[#999682]">
        <DesignToolbox />
        <SchematicPane />
        <InstrumentBar />
      </div>
      <div className="flex h-4 justify-end gap-[3px] border-b border-[#d8d5c4] text-[10px] leading-3">
        <div className="w-[41px] border-t border-l border-[#a5a28f]">-</div>
        <div className="w-[104px] border-t border-l border-[#a5a28f]" />
        <div className="w-[104px] border-t border-l border-[#a5a28f]">-</div>
        <div className="flex w-[56px] justify-around border-t border-l border-[#a5a28f] pt-0.5">
          {[1, 2, 3, 4, 5, 6, 7].map((n) => <span key={n} className="w-[5px] border-t border-l border-[#a5a28f]" />)}
        </div>
      </div>
      <XpTaskbar />
    </div>
  );
}

/* ---------- SLIDE LIST ---------- */

function BlueSlide({ id, children }: { id: string; children: ReactNode }) {
  return (
    <div className="relative -ml-[38px] h-[146px] w-[195px] shrink-0 overflow-hidden font-['Noto_Sans_CJK_SC',sans-serif] font-bold text-white">
      <svg viewBox="0 0 195 146" className="h-full w-full">
        <defs>
          <linearGradient id={`${id}-bg`}>
            <stop offset="0.300" stopColor="#0000e6" />
            <stop offset="0.650" stopColor="#00009a" />
            <stop offset="0.950" stopColor="#000008" />
          </linearGradient>
          <linearGradient id={`${id}-fan`} x1="0" y1="0" x2="0" y2="1">
            <stop offset="0" stopColor="#2a3fa8" />
            <stop offset="0.600" stopColor="#335cf2" />
          </linearGradient>
        </defs>
        <rect width="195" height="146" fill={`url(#${id}-bg)`} />
        <path d="M0 1C60 2 100 18 130 45" stroke="#5a6cf0" fill="none" />
        <path d="M128 43L195 82V146H179C179 105 160 70 128 43z" fill={`url(#${id}-fan)`} />
      </svg>
      <div className="absolute inset-0">{children}</div>
    </div>
  );
}

function ShotSlide({ probes = false }: { probes?: boolean }) {
  return (
    <svg viewBox="541 246 930 698" className="-ml-[38px] block h-[146px] w-[195px] max-w-none shrink-0">
      <rect x="541" y="246" width="930" height="698" fill="#ece9d8" />
      <rect x="541" y="246" width="930" height="26" fill="#0a5ae4" />
      <path d="M560 258H900" stroke="#a9c6ff" strokeWidth="8" strokeDasharray="14 4" />
      <path d="M1385 258H1425" stroke="#6d9af5" strokeWidth="18" strokeDasharray="18 3" />
      <rect x="1448" y="250" width="18" height="18" fill="#d9492c" />
      <path d="M566 281H1140" stroke="#777" strokeWidth="8" strokeDasharray="30 18" />
      <path d="M556 305H1140M640 331H1240" stroke="#8a8878" strokeWidth="11" strokeDasharray="12 9" />
      <rect x="1154" y="297" width="132" height="17" fill="#fff" />
      <rect x="546" y="392" width="190" height="483" fill="#fff" />
      <rect x="753" y="350" width="674" height="505" fill="#fff" />
      <rect x="1427" y="350" width="13" height="505" fill="#f4f4f8" />
      <rect x="1427" y="420" width="13" height="302" fill="#c2d2fb" />
      <rect x="817" y="857" width="371" height="12" fill="#c2d2fb" />
      <path d="M1458 360V712" stroke="#567" strokeWidth="13" strokeDasharray="12 8" />
      <path d="M760 888H920" stroke="#666" strokeWidth="9" strokeDasharray="20 5" />
      <Schematic />
      <rect x="541" y="917" width="930" height="27" fill="#2757d2" />
      <rect x="541" y="917" width="88" height="27" fill="#3c9a3a" />
      <rect x="865" y="920" width="290" height="22" fill="#3a78ec" />
      <rect x="1368" y="917" width="103" height="27" fill="#1c9ce8" />
      {probes && (
        <g>
          <path d="M753 350h70v45h-70zM1222 350h150v52h-150z" fill="#a5d0a0" stroke="#5a8a58" />
          <circle cx="1280" cy="362" r="22" fill="#9aa" />
          <path d="M1090 366l-55-30M1385 440l-50-28" stroke="#a22" strokeWidth="10" />
        </g>
      )}
    </svg>
  );
}

function SlideList() {
  return (
    <aside className="flex w-[207px] shrink-0 border-r border-[#bdbdbd]">
      <div className="flex h-full w-[183px] shrink-0 flex-col gap-[27px] overflow-hidden pt-4">
        <BlueSlide id="cover">
          <p className="mt-9 text-center text-[19px] leading-[35px] whitespace-nowrap">两级负反馈放大器<br />仿真</p>
        </BlueSlide>
        <BlueSlide id="step-one">
          <p className="mt-1.5 pl-[53px] text-[16px] leading-6">实验步骤</p>
          <p className="pl-6 text-[10px] leading-[18px]">按图构建电路</p>
        </BlueSlide>
        <div className="-my-1 w-[161px] shrink-0 border-y-4 border-r-4 border-[#a04234]"><ShotSlide /></div>
        <BlueSlide id="step-two">
          <p className="mt-1.5 pl-[53px] text-[16px] leading-6">实验步骤</p>
          <p className="pl-6 text-[10px] leading-3 whitespace-nowrap">按图构建电路<br />接入信号源，示波器<br />将输入信号设为1KHz，10mVp<br />开始仿真，并观察输出波形</p>
        </BlueSlide>
        <ShotSlide probes />
      </div>
      <div className="flex w-[19px] flex-col bg-[#d9d9d9] pt-0.5 text-[10px] text-[#666]">
        <button className="h-[19px] border border-[#c0c0c0] bg-white leading-4">▲</button>
        <div className="mt-[300px] h-[22px] border border-[#ababab] bg-white" />
        <button className="mt-auto mb-0.5 h-[19px] border border-[#c0c0c0] bg-white leading-4">▼</button>
      </div>
    </aside>
  );
}

/* ---------- STATUS BAR ---------- */

function StatusBar() {
  return (
    <footer className="flex h-[27px] shrink-0 items-center overflow-hidden border-t border-[#c6c6c6] bg-[#f1f1f1] whitespace-nowrap text-[#333]">
      <span className="ml-1 w-[95px]">张，共 150 张</span>
      <Svg w={19} h={16} className="ml-6"><path d="M9 3C7 1 4 1 1 2v12c3-1 6-1 8 1 1-1 3-2 5-2M9 3v12M9 3c2-2 4-2 6-1M11 11l6-8 1 1-6 8z" stroke="#666" /></Svg>
      <span className="ml-5">中文(中国)</span>
      <Svg w={19} h={18} className="ml-[21px]"><path d="M7 2C1 4 0 12 6 15M4 15h3v-4M10 1l2 4M8 5l6 1-3 3M11 10c1-3 6-2 5 0 0 2-3 2-3 4M13 16v2" stroke="#555" strokeWidth="1.500" /></Svg>
      <span className="ml-1">辅助功能: 不可用</span>
      <div className="mr-[-9px] ml-auto flex h-full items-center">
        <button className="flex items-center gap-1"><Svg w={14} h={15}><path d="M0 7h14M0 10.500h14M0 14h14" stroke="#555" /><path d="M4 5l3-4 3 4z" fill="#555" /></Svg>备注</button>
        <button className="ml-6 flex items-center gap-1"><Svg w={17} h={16}><path d="M1 1h15v10H8l-4 4v-4H1z" fill="#444" /></Svg>批注</button>
        <button aria-label="普通视图" className="ml-6 flex h-full w-[49px] items-center justify-center bg-[#c8c8c8]"><Svg w={18} h={16}><path d="M1 1h16v14H1zM5 1v14M8 4h6v5H8zM8 12h6" stroke="#555" /></Svg></button>
        <button aria-label="幻灯片浏览" className="flex w-[50px] justify-center"><Svg w={17} h={16}><path d="M1 1h6v5H1zM10 1h6v5h-6zM1 9h6v5H1zM10 9h6v5h-6z" stroke="#666" /></Svg></button>
        <button aria-label="阅读视图" className="flex w-[50px] justify-center"><Svg w={18} h={16}><path d="M9 3C7 1 4 1 1 2v11c3-1 6-1 8 1 2-2 5-2 8-1V2c-3-1-6-1-8 1zv11M3 5h4M3 8h4M11 5h4M11 8h4" stroke="#666" /></Svg></button>
        <button aria-label="幻灯片放映" className="flex w-[50px] justify-center"><Svg w={17} h={16}><path d="M0 1.500h17M2 2v7h13V2M8.500 9v5M5 14.500h7" stroke="#666" strokeWidth="1.300" /></Svg></button>
        <button aria-label="缩小" className="ml-2"><Svg w={11} h={3}><path d="M0 1.500h11" stroke="#444" strokeWidth="1.500" /></Svg></button>
        <Svg w={124} h={16} className="ml-1.5"><path d="M0 8h124M62 4v8" stroke="#777" /><path d="M45 1h5v14h-5z" fill="#555" /></Svg>
        <button aria-label="放大" className="ml-1.5"><Svg w={11} h={11}><path d="M0 5.500h11M5.500 0v11" stroke="#444" /></Svg></button>
      </div>
    </footer>
  );
}

/* ---------- WINDOWS TASKBAR ---------- */

function Taskbar() {
  return (
    <div className="flex h-[50px] shrink-0 items-center overflow-hidden bg-linear-to-r from-[#c9ece0] from-30% via-[#dbe7ef] via-50% to-[#c9e8df] whitespace-nowrap text-[#222]">
      <div className="flex h-full w-[394px] shrink-0 items-center justify-between border-b border-[#ccc] bg-[#fcfcfc] pl-3.5">
        <input aria-label="搜索" placeholder="在这里输入你要搜索的内容" className="w-[260px] text-[19px] placeholder:text-[#333]" />
        <Svg w={100} h={50}>
          <path d="M2 50c4-14 30-26 50-23 20-2 40 8 48 23z" fill="#4cb8d0" />
          <path d="M8 50c10-14 20-6 28-12l-6 12z" fill="#dff2f2" />
          <path d="M32 46l9-16 8-4 10 8 5 14z" fill="#a5583c" />
          <path d="M42 28l3-20h4l3 20z" fill="#c4694c" />
          <path d="M43 10l4-7 4 7z" fill="#8d3c2e" />
          <path d="M60 38c12-7 26-8 40-4v12H64z" fill="#8c4d2c" />
          <path d="M60 37c12-7 28-8 40-4v5H62z" fill="#4da14f" />
          <path d="M78 24h16v9H78z" fill="#e6e0d2" />
          <circle cx="14" cy="14" r="7" fill="#d5e3ee" /><circle cx="22" cy="11" r="6" fill="#c3d6e6" /><path d="M8 14h22v6H10z" fill="#d5e3ee" />
          <path d="M64 10l4 4 5-2-3 6-5 2z" fill="#a86fe0" />
          <circle cx="32" cy="25" r="2" fill="#e9b444" /><circle cx="86" cy="21" r="2" fill="#5cc98e" />
        </Svg>
      </div>
      <button aria-label="文件资源管理器" className="ml-2.5 flex h-full w-[50px] items-center justify-center border-b-3 border-[#1180c8]">
        <Svg w={28} h={26}><path d="M0 2h9l3 3h15v20H0z" fill="#f0b429" /><path d="M0 8h27v17H0z" fill="#fbd667" /><path d="M6 25v-9h16v9h-5v-4h-6v4z" fill="#3f93d0" /></Svg>
      </button>
      <button aria-label="PowerPoint" className="ml-1.5 flex h-full w-[61px] items-center justify-center border-b-3 border-[#1180c8] bg-[#e9f7f1]">
        <Svg w={32} h={30}><circle cx="17" cy="15" r="14" fill="#d35230" /><path d="M17 1a14 14 0 0 1 14 14H17z" fill="#f08a66" /><path d="M1 8h15v15H1z" fill="#b93a1d" /><path d="M6 20v-9h3.500a2.800 2.800 0 0 1 0 5.600H6" stroke="#fff" strokeWidth="1.800" /></Svg>
      </button>
      <button aria-label="OBS" className="ml-1.5 flex h-full w-[50px] items-center justify-center border-b-3 border-[#1180c8]">
        <Svg w={30} h={30}><circle cx="14" cy="15" r="13" fill="#1f1f24" /><path d="M14 14c-5-1-5-8 0-9M14 15c4-3 9 1 8 5M13 16c0 5-6 7-9 3" stroke="#cfcfd4" strokeWidth="1.500" /><circle cx="20" cy="21" r="7" fill="#e01b1b" /></Svg>
      </button>
      <div className="mr-[-4px] ml-auto flex items-center">
        <Svg w={30} h={30}><circle cx="19" cy="10" r="8" fill="#f6b73c" /><path d="M4 22a6 6 0 0 1 3-11 7 7 0 0 1 13 2 5 5 0 0 1 1 9z" fill="#dde8f5" /><circle cx="21" cy="24" r="5" fill="#c1172f" /></Svg>
        <span className="ml-2 text-[19px]">36°C 多云</span>
        <Svg w={16} h={10} className="ml-5"><path d="M1 9l7-7 7 7" stroke="#333" strokeWidth="1.500" /></Svg>
        <Svg w={22} h={20} className="ml-3"><path d="M5 15a5 5 0 0 1 0-9 7 7 0 0 1 12 1 4 4 0 0 1 1 8z" fill="#8a8a8a" stroke="#444" /><circle cx="15" cy="14" r="5.500" fill="#c4314b" /><path d="M13 12l4 4M17 12l-4 4" stroke="#fff" strokeWidth="1.300" /></Svg>
        <Mic size={20} fill="#222" className="ml-2" />
        <Svg w={22} h={18} className="ml-2.5"><path d="M5 5h14v9H5z" fill="#222" stroke="#222" /><path d="M20 8v3M1 2v4h5V2M3.500 6v5" stroke="#222" strokeWidth="1.600" /></Svg>
        <Wifi size={19} strokeWidth={1.6} className="ml-3 -rotate-45" />
        <Volume2 size={21} strokeWidth={1.4} className="ml-2" />
        <span className="ml-2 text-[19px]">中</span>
        <div className="ml-2.5 w-[61px] text-right text-[16px] leading-[23px]">10:10<br />2022/8/</div>
      </div>
    </div>
  );
}

/* ---------- PAGE ---------- */

export default function App() {
  return (
    <div className={`flex h-screen flex-col overflow-hidden bg-[#e5e5e5] text-[15px] ${UI}`}>
      <div className="shrink-0">
        <TitleBar />
        <Tabs />
        <Ribbon />
      </div>
      <LicenseBar />
      <div className="flex min-h-0 flex-1">
        <SlideList />
        <main className="flex min-w-0 flex-1 flex-col">
          <div className="min-h-0 flex-1 overflow-hidden pt-3 pl-[334px]">
            <Multisim />
          </div>
          <div className="h-[44px] shrink-0 border-t border-[#bdbdbd] pl-3.5 text-[18px] leading-[40px] text-[#555]">单击此处添加备注</div>
        </main>
      </div>
      <StatusBar />
      <Taskbar />
    </div>
  );
}
